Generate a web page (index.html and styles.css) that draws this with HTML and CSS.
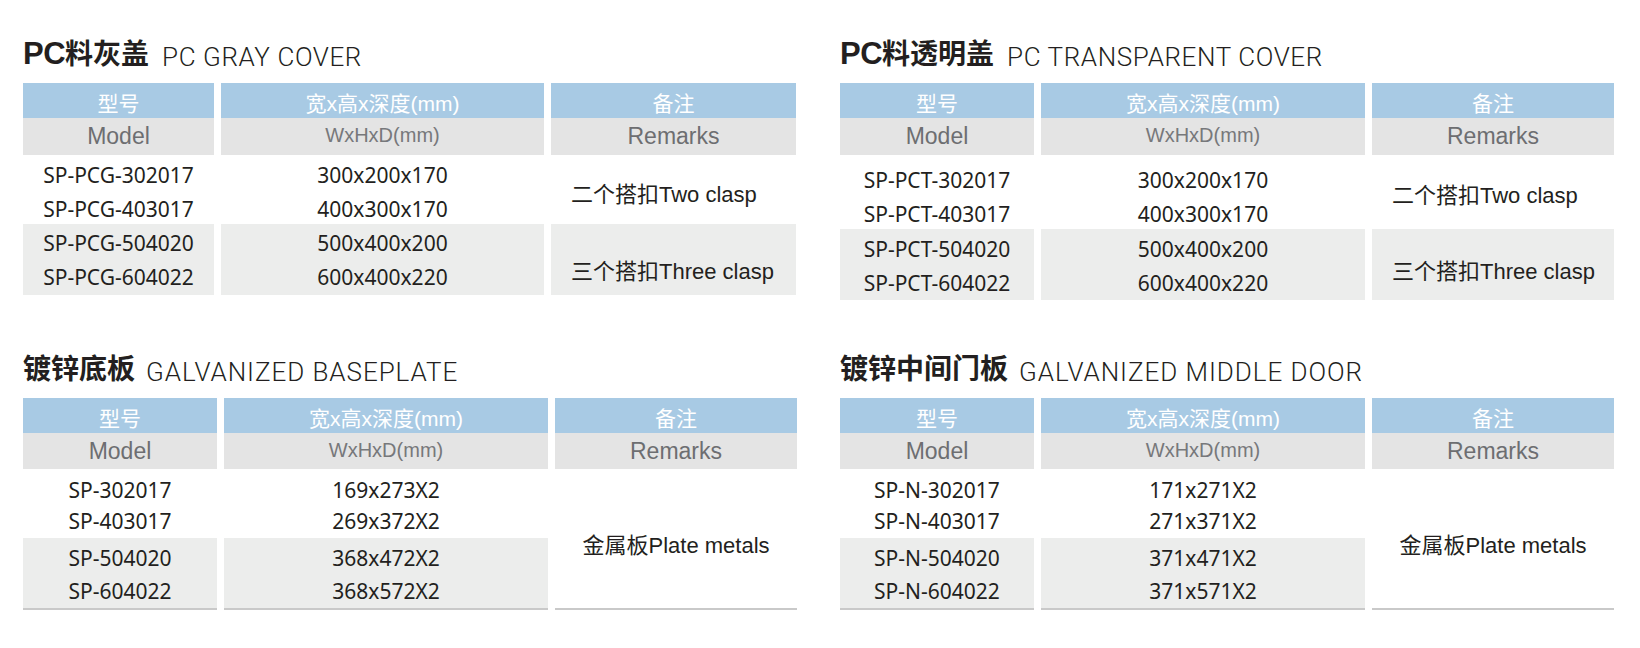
FILE: index.html
```html
<!DOCTYPE html>
<html lang="zh-CN">
<head>
<meta charset="utf-8">
<title>规格表</title>
<link rel="stylesheet" href="styles.css">
</head>
<body>
<div class="page">

  <section class="block">
    <h2 class="title"><span class="title-pc">PC</span><span class="title-cn">料灰盖</span><span class="title-en title-en--wide">PC GRAY COVER</span></h2>
    <div class="spec spec--t1">
      <div class="head">型号</div>
      <div class="head">宽x高x深度(mm)</div>
      <div class="head">备注</div>
      <div class="sub">Model</div>
      <div class="sub sub--dim">WxHxD(mm)</div>
      <div class="sub">Remarks</div>
      <div class="rows rows--p5"><span>SP-PCG-302017</span><span>SP-PCG-403017</span></div>
      <div class="rows rows--p5"><span>300x200x170</span><span>400x300x170</span></div>
      <div class="note note--p5">二个搭扣Two clasp</div>
      <div class="rows rows--alt rows--p1"><span>SP-PCG-504020</span><span>SP-PCG-604022</span></div>
      <div class="rows rows--alt rows--p1"><span>500x400x200</span><span>600x400x220</span></div>
      <div class="note note--alt note--p18">三个搭扣Three clasp</div>
    </div>
  </section>

  <section class="block">
    <h2 class="title"><span class="title-pc">PC</span><span class="title-cn">料透明盖</span><span class="title-en title-en--wide">PC TRANSPARENT COVER</span></h2>
    <div class="spec spec--t2">
      <div class="head">型号</div>
      <div class="head">宽x高x深度(mm)</div>
      <div class="head">备注</div>
      <div class="sub">Model</div>
      <div class="sub sub--dim">WxHxD(mm)</div>
      <div class="sub">Remarks</div>
      <div class="rows rows--p10"><span>SP-PCT-302017</span><span>SP-PCT-403017</span></div>
      <div class="rows rows--p10"><span>300x200x170</span><span>400x300x170</span></div>
      <div class="note note--p2">二个搭扣Two clasp</div>
      <div class="rows rows--alt rows--p3"><span>SP-PCT-504020</span><span>SP-PCT-604022</span></div>
      <div class="rows rows--alt rows--p3"><span>500x400x200</span><span>600x400x220</span></div>
      <div class="note note--alt note--p9">三个搭扣Three clasp</div>
    </div>
  </section>

  <section class="block">
    <h2 class="title"><span class="title-cn">镀锌底板</span><span class="title-en">GALVANIZED BASEPLATE</span></h2>
    <div class="spec spec--t3">
      <div class="head">型号</div>
      <div class="head">宽x高x深度(mm)</div>
      <div class="head">备注</div>
      <div class="sub">Model</div>
      <div class="sub sub--dim">WxHxD(mm)</div>
      <div class="sub">Remarks</div>
      <div class="rows rows--tight rows--p5"><span>SP-302017</span><span>SP-403017</span></div>
      <div class="rows rows--tight rows--p5"><span>169x273X2</span><span>269x372X2</span></div>
      <div class="note note--span note--center note--p8">金属板Plate metals</div>
      <div class="rows rows--alt rows--last rows--p4"><span>SP-504020</span><span>SP-604022</span></div>
      <div class="rows rows--alt rows--last rows--p4"><span>368x472X2</span><span>368x572X2</span></div>
    </div>
  </section>

  <section class="block">
    <h2 class="title"><span class="title-cn">镀锌中间门板</span><span class="title-en">GALVANIZED MIDDLE DOOR</span></h2>
    <div class="spec spec--t3">
      <div class="head">型号</div>
      <div class="head">宽x高x深度(mm)</div>
      <div class="head">备注</div>
      <div class="sub">Model</div>
      <div class="sub sub--dim">WxHxD(mm)</div>
      <div class="sub">Remarks</div>
      <div class="rows rows--tight rows--p5"><span>SP-N-302017</span><span>SP-N-403017</span></div>
      <div class="rows rows--tight rows--p5"><span>171x271X2</span><span>271x371X2</span></div>
      <div class="note note--span note--center note--p8">金属板Plate metals</div>
      <div class="rows rows--alt rows--last rows--p4"><span>SP-N-504020</span><span>SP-N-604022</span></div>
      <div class="rows rows--alt rows--last rows--p4"><span>371x471X2</span><span>371x571X2</span></div>
    </div>
  </section>

</div>
</body>
</html>
```

FILE: styles.css
```css
* {
  box-sizing: border-box;
}

body {
  margin: 0;
  background: #ffffff;
  color: #231f20;
  font-family: "Liberation Sans", "Noto Sans CJK SC", sans-serif;
}

.page {
  display: grid;
  grid-template-columns: 773px 775px;
  column-gap: 44px;
  row-gap: 48px;
  padding: 33px 0 0 23px;
  align-items: start;
}

/* ---------- section title ---------- */
.title {
  margin: 0 0 10px;
  height: 40px;
  line-height: 38px;
  white-space: nowrap;
  font-weight: normal;
  color: #231f20;
}

.title-pc {
  font-family: "Liberation Sans", sans-serif;
  font-weight: 700;
  font-size: 31px;
  letter-spacing: -0.5px;
}

.title-cn {
  font-family: "Noto Sans CJK SC", sans-serif;
  font-weight: 700;
  font-size: 28px;
}

.title-en {
  font-family: Roboto, "Liberation Sans", sans-serif;
  font-weight: 300;
  font-size: 26px;
  letter-spacing: 0.95px;
  margin-left: 11px;
  vertical-align: -2px;
}

.title-en--wide {
  margin-left: 13px;
  letter-spacing: 0.6px;
}

/* ---------- spec table ---------- */
.spec {
  display: grid;
  grid-template-columns: 194px 324px 242px;
  column-gap: 7px;
}

.spec--t1 {
  grid-template-columns: 191px 323px 245px;
  grid-template-rows: 35px 37px 69px 71px;
}

.spec--t2 {
  grid-template-rows: 35px 37px 74px 71px;
}

.spec--t3 {
  grid-template-rows: 35px 36px 69px 72px;
}

.head {
  background: #a8cae4;
  color: #ffffff;
  font-family: "Liberation Sans", "Noto Sans CJK SC", sans-serif;
  font-size: 21px;
  display: flex;
  align-items: center;
  justify-content: center;
  padding-top: 2px;
}

.sub {
  background: #e4e4e4;
  color: #6d6e71;
  font-size: 23px;
  display: flex;
  align-items: center;
  justify-content: center;
}

.sub--dim {
  font-size: 20px;
  color: #77787b;
  padding-bottom: 2px;
}

.rows {
  display: flex;
  flex-direction: column;
  align-items: center;
  justify-content: center;
  font-family: "Noto Sans", "Liberation Sans", sans-serif;
  font-size: 21px;
  line-height: 34px;
  color: #231f20;
}

.rows--tight {
  line-height: 31px;
}

.rows--alt {
  background: #ecedec;
}

.rows--last {
  border-bottom: 2px solid #c9c9c9;
  line-height: 33px;
}

.rows--p1 { padding-top: 1px; }
.rows--p3 { padding-top: 3px; }
.rows--p4 { padding-top: 4px; }
.rows--p5 { padding-top: 5px; }
.rows--p10 { padding-top: 10px; }

.note {
  display: flex;
  align-items: center;
  padding-left: 20px;
  font-family: "Liberation Sans", "Noto Sans CJK SC", sans-serif;
  font-size: 22px;
  color: #231f20;
  white-space: nowrap;
}

.note--alt {
  background: #ecedec;
}

.note--span {
  grid-column: 3;
  grid-row: 3 / span 2;
  border-bottom: 2px solid #c9c9c9;
}

.note--center {
  justify-content: center;
  padding-left: 0;
}

.note--p2 { padding-top: 2px; }
.note--p5 { padding-top: 5px; }
.note--p8 { padding-top: 8px; }
.note--p9 { padding-top: 9px; }
.note--p18 { padding-top: 18px; }
```
